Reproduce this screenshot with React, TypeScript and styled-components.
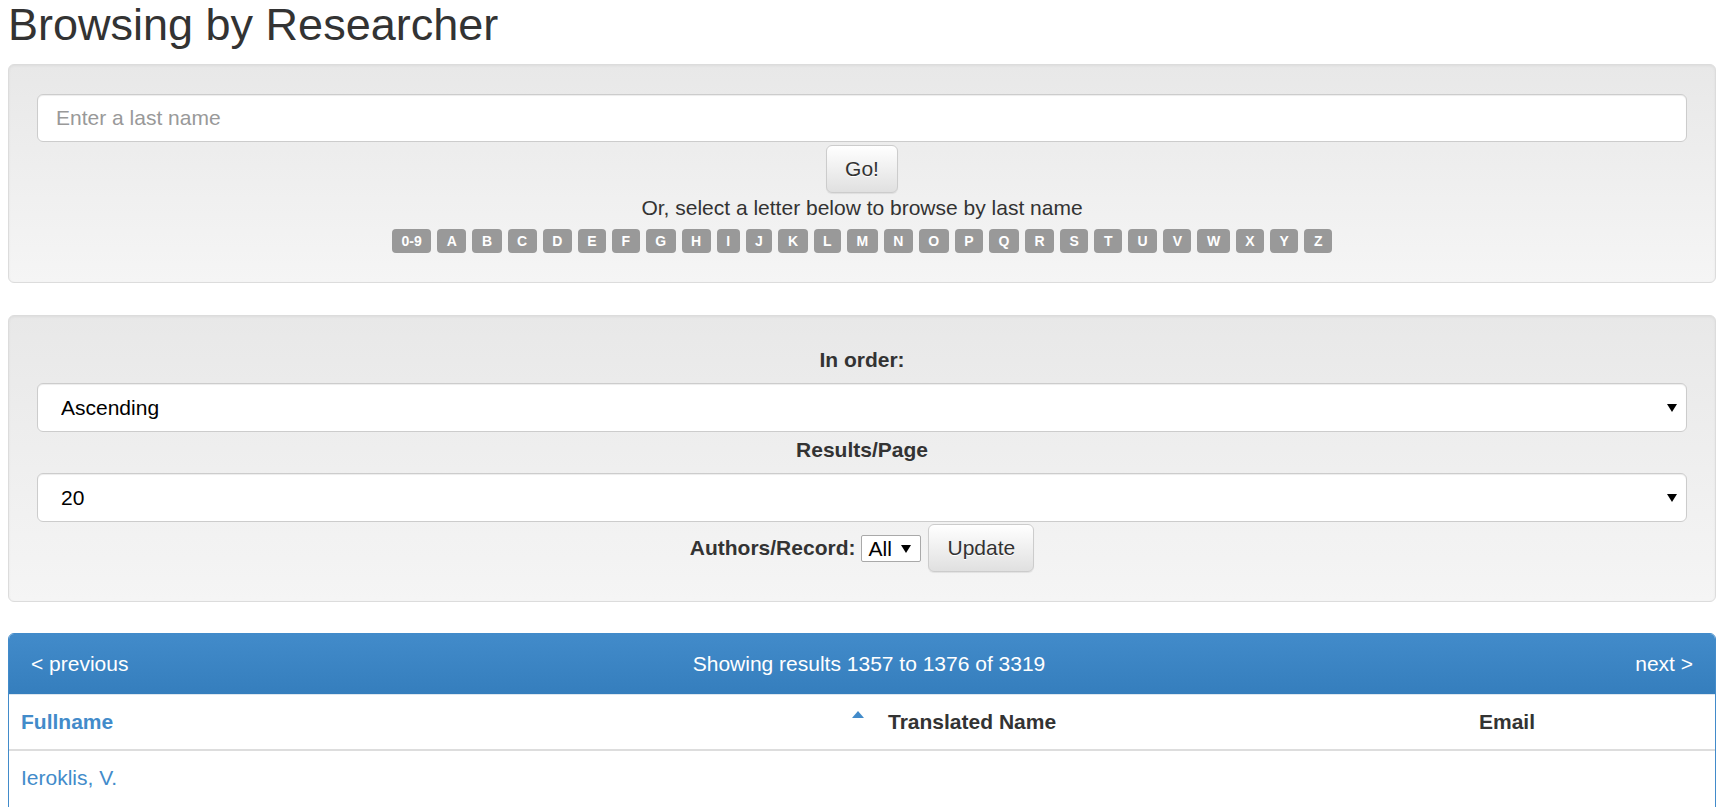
import styled, { createGlobalStyle } from 'styled-components'

const letters = ['0-9', ...'ABCDEFGHIJKLMNOPQRSTUVWXYZ'.split('')]

const GlobalStyle = createGlobalStyle`
  html, body {
    margin: 0;
    padding: 0;
    overflow: hidden;
    background: #fff;
  }
  body {
    font-family: "Liberation Sans", Arial, Helvetica, sans-serif;
    font-size: 21px;
    line-height: 30px;
    color: #333;
  }
  * {
    box-sizing: border-box;
  }
`

export default function App() {
  return (
    <>
      <GlobalStyle />
      <Page>
        <Title>Browsing by Researcher</Title>

        {/* 姓氏搜索 */}
        <Well $gap={32}>
          <SearchInput type="text" placeholder="Enter a last name" />
          <Button type="button">Go!</Button>
          <Hint>Or, select a letter below to browse by last name</Hint>
          <LetterRow>
            {letters.map((l) => (
              <LetterLabel key={l} href="#">{l}</LetterLabel>
            ))}
          </LetterRow>
        </Well>

        {/* 排序选项 */}
        <Well $gap={31}>
          <FieldLabel>In order:</FieldLabel>
          <SelectWrap>
            <Select defaultValue="asc">
              <option value="asc">Ascending</option>
              <option value="desc">Descending</option>
            </Select>
            <Arrow />
          </SelectWrap>
          <FieldLabel>Results/Page</FieldLabel>
          <SelectWrap>
            <Select defaultValue="20">
              <option value="5">5</option>
              <option value="10">10</option>
              <option value="20">20</option>
              <option value="50">50</option>
            </Select>
            <Arrow />
          </SelectWrap>
          <AuthorsRow>
            <InlineLabel>Authors/Record:</InlineLabel>
            <SmallSelectWrap>
              <SmallSelect defaultValue="all">
                <option value="all">All</option>
                <option value="1">1</option>
              </SmallSelect>
              <SmallArrow />
            </SmallSelectWrap>
            <Button type="button">Update</Button>
          </AuthorsRow>
        </Well>

        {/* 结果列表 */}
        <ResultsPanel>
          <PanelHeading>
            <HeadLink href="#">&lt; previous</HeadLink>
            <HeadCenter>Showing results 1357 to 1376 of 3319</HeadCenter>
            <HeadLink href="#" $right>next &gt;</HeadLink>
          </PanelHeading>
          <Table>
            <colgroup>
              <col style={{ width: 867 }} />
              <col style={{ width: 591 }} />
              <col />
            </colgroup>
            <thead>
              <tr>
                <Th>
                  <SortLink href="#">Fullname</SortLink>
                  <SortCaret />
                </Th>
                <Th>Translated Name</Th>
                <Th>Email</Th>
              </tr>
            </thead>
            <tbody>
              <tr>
                <Td><RowLink href="#">Ieroklis, V.</RowLink></Td>
                <Td />
                <Td />
              </tr>
            </tbody>
          </Table>
        </ResultsPanel>
      </Page>
    </>
  )
}

const Page = styled.div`
  padding: 0 7px 0 8px;
`

const Title = styled.h1`
  margin: 0 0 14px;
  font-size: 45px;
  line-height: 50px;
  font-weight: 500;
  color: #333;
`

const Well = styled.div<{ $gap: number }>`
  display: flex;
  flex-direction: column;
  align-items: center;
  margin-bottom: ${(p) => p.$gap}px;
  padding: 29px 28px;
  background: linear-gradient(to bottom, #e8e8e8 0%, #f5f5f5 100%);
  border: 1px solid #dcdcdc;
  border-radius: 6px;
  box-shadow: inset 0 1px 3px rgba(0, 0, 0, 0.05), 0 1px 0 rgba(255, 255, 255, 0.1);
`

const SearchInput = styled.input`
  width: 100%;
  height: 48px;
  padding: 0 18px;
  font-family: inherit;
  font-size: 21px;
  color: #555;
  background: #fff;
  border: 1px solid #ccc;
  border-radius: 6px;
  box-shadow: inset 0 1px 1px rgba(0, 0, 0, 0.075);
  outline: none;

  &::placeholder {
    color: #999;
  }
`

const Button = styled.button`
  height: 48px;
  margin-top: 3px;
  padding: 0 18px;
  font-family: inherit;
  font-size: 21px;
  line-height: 30px;
  color: #333;
  text-shadow: 0 1px 0 #fff;
  background: linear-gradient(to bottom, #fff 0%, #e0e0e0 100%);
  border: 1px solid #ccc;
  border-radius: 6px;
  box-shadow: inset 0 1px 0 rgba(255, 255, 255, 0.15), 0 1px 1px rgba(0, 0, 0, 0.075);
  cursor: pointer;
`

const Hint = styled.div`
  line-height: 30px;
`

const LetterRow = styled.div`
  display: flex;
  gap: 6px;
  margin-top: 6px;
`

const LetterLabel = styled.a`
  display: flex;
  align-items: center;
  height: 24px;
  padding: 0 9.5px 1px;
  font-size: 14px;
  font-weight: 700;
  color: #fff;
  text-decoration: none;
  background: #999;
  border-radius: 4px;
`

const FieldLabel = styled.label`
  margin-bottom: 8px;
  font-weight: 700;
  line-height: 30px;
`

const SelectWrap = styled.div`
  position: relative;
  width: 100%;
  margin-bottom: 3px;
`

const Select = styled.select`
  display: block;
  width: 100%;
  height: 49px;
  padding: 0 40px 0 23px;
  font-family: inherit;
  font-size: 21px;
  color: #000;
  background: #fff;
  border: 1px solid #ccc;
  border-radius: 6px;
  box-shadow: inset 0 1px 1px rgba(0, 0, 0, 0.075);
  appearance: none;
  outline: none;
`

const Arrow = styled.span`
  position: absolute;
  right: 10px;
  top: 21px;
  width: 0;
  height: 0;
  border-left: 5px solid transparent;
  border-right: 5px solid transparent;
  border-top: 8px solid #000;
  pointer-events: none;
`

const AuthorsRow = styled.div`
  display: flex;
  align-items: center;
  gap: 6px;
  margin-top: -1px;

  ${Button} {
    margin-top: 0;
    margin-left: 1px;
  }
`

const InlineLabel = styled.label`
  font-weight: 700;
`

const SmallSelectWrap = styled.div`
  position: relative;
`

const SmallSelect = styled.select`
  display: block;
  width: 60px;
  height: 27px;
  padding: 0 22px 0 6px;
  font-family: inherit;
  font-size: 21px;
  color: #000;
  background: #fff;
  border: 1px solid #a9a9a9;
  border-radius: 2px;
  appearance: none;
  outline: none;
`

const SmallArrow = styled.span`
  position: absolute;
  right: 10px;
  top: 10px;
  width: 0;
  height: 0;
  border-left: 5px solid transparent;
  border-right: 5px solid transparent;
  border-top: 8px solid #000;
  pointer-events: none;
`

const ResultsPanel = styled.div`
  min-height: 260px;
  border: 1px solid #428bca;
  border-radius: 6px;
  background: #fff;
  overflow: hidden;
`

const PanelHeading = styled.div`
  display: grid;
  grid-template-columns: 1fr auto 1fr;
  align-items: center;
  padding: 15px 22px;
  color: #fff;
  background: linear-gradient(to bottom, #428bca 0%, #357ebd 100%);
  border-bottom: 1px solid #dde6ee;
`

const HeadLink = styled.a<{ $right?: boolean }>`
  justify-self: ${(p) => (p.$right ? 'end' : 'start')};
  color: #fff;
  text-decoration: none;
`

const HeadCenter = styled.span`
  margin-left: 14px;
  color: #fff;
`

const Table = styled.table`
  width: 100%;
  border-collapse: collapse;
  table-layout: fixed;
`

const Th = styled.th`
  position: relative;
  padding: 12px 12px;
  text-align: left;
  font-weight: 700;
  line-height: 30px;
  color: #333;
  border-bottom: 2px solid #ddd;
`

const SortLink = styled.a`
  color: #428bca;
  text-decoration: none;
`

const SortCaret = styled.span`
  position: absolute;
  right: 12px;
  top: 16px;
  width: 0;
  height: 0;
  border-left: 6px solid transparent;
  border-right: 6px solid transparent;
  border-bottom: 7px solid #428bca;
`

const Td = styled.td`
  padding: 12px;
  line-height: 30px;
  vertical-align: top;
`

const RowLink = styled.a`
  color: #428bca;
  text-decoration: none;
`
